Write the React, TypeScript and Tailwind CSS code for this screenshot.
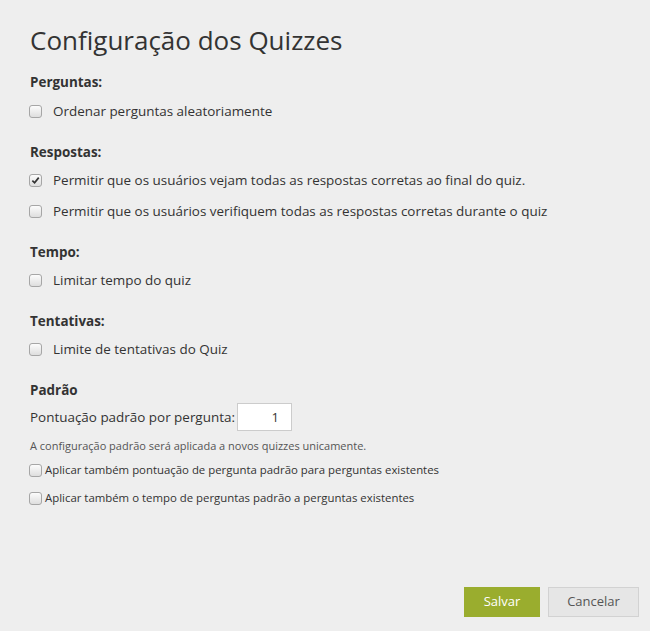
import React, { useState } from 'react';

const Check: React.FC<{ checked: boolean; onChange: () => void }> = ({ checked, onChange }) => (
  <span
    onClick={onChange}
    className="inline-flex w-[13px] h-[13px] shrink-0 items-center justify-center rounded-[3px] border border-[#a6a6a6] bg-gradient-to-b from-[#fcfcfc] to-[#dedede] cursor-pointer"
  >
    {checked && (
      <svg viewBox="0 0 10 10" className="w-[9px] h-[9px]">
        <path d="M1.5 5.2 L4 7.6 L8.6 1.8" fill="none" stroke="#333" strokeWidth="1.9" />
      </svg>
    )}
  </span>
);

const Row: React.FC<{ label: string; checked: boolean; onChange: () => void }> = ({ label, checked, onChange }) => (
  <label className="flex items-center h-5 text-[13.45px] text-[#333]">
    <Check checked={checked} onChange={onChange} />
    <span className="ml-[11px]">{label}</span>
  </label>
);

const SmallRow: React.FC<{ label: string; checked: boolean; onChange: () => void }> = ({ label, checked, onChange }) => (
  <label className="flex items-center h-[18px] text-[11.4px] text-[#333]">
    <Check checked={checked} onChange={onChange} />
    <span className="ml-[3px]">{label}</span>
  </label>
);

export default function App() {
  const [opts, setOpts] = useState({
    random: false,
    showAnswers: true,
    verifyAnswers: false,
    limitTime: false,
    limitAttempts: false,
    applyScore: false,
    applyTime: false,
  });
  const [score, setScore] = useState('1');

  const toggle = (key: keyof typeof opts) => setOpts((o) => ({ ...o, [key]: !o[key] }));

  return (
    <div className="h-[631px] bg-[#eeeeee] flex flex-col font-['Open_Sans',sans-serif] text-[#333]">
      <div className="pl-[29px] pt-[20px]">
        <h1 className="text-[26px] leading-[40px] text-[#333] ml-px">Configuração dos Quizzes</h1>

        {/* Perguntas */}
        <div className="mt-[12px]">
          <h2 className="text-[13.45px] font-bold leading-5 ml-px">Perguntas:</h2>
          <div className="mt-[9px]">
            <Row label="Ordenar perguntas aleatoriamente" checked={opts.random} onChange={() => toggle('random')} />
          </div>
        </div>

        {/* Respostas */}
        <div className="mt-[21px]">
          <h2 className="text-[13.45px] font-bold leading-5 ml-px">Respostas:</h2>
          <div className="mt-[8px] flex flex-col gap-[11px]">
            <Row
              label="Permitir que os usuários vejam todas as respostas corretas ao final do quiz."
              checked={opts.showAnswers}
              onChange={() => toggle('showAnswers')}
            />
            <Row
              label="Permitir que os usuários verifiquem todas as respostas corretas durante o quiz"
              checked={opts.verifyAnswers}
              onChange={() => toggle('verifyAnswers')}
            />
          </div>
        </div>

        {/* Tempo */}
        <div className="mt-[21px]">
          <h2 className="text-[13.45px] font-bold leading-5 ml-px">Tempo:</h2>
          <div className="mt-[8px]">
            <Row label="Limitar tempo do quiz" checked={opts.limitTime} onChange={() => toggle('limitTime')} />
          </div>
        </div>

        {/* Tentativas */}
        <div className="mt-[21px]">
          <h2 className="text-[13.45px] font-bold leading-5 ml-px">Tentativas:</h2>
          <div className="mt-[8px]">
            <Row label="Limite de tentativas do Quiz" checked={opts.limitAttempts} onChange={() => toggle('limitAttempts')} />
          </div>
        </div>

        {/* Padrão */}
        <div className="mt-[21px]">
          <h2 className="text-[13.45px] font-bold leading-5 ml-px">Padrão</h2>
          <div className="mt-[3px] flex items-center ml-px">
            <span className="text-[13.45px]">Pontuação padrão por pergunta:</span>
            <input
              value={score}
              onChange={(e) => setScore(e.target.value)}
              className="ml-[2px] w-[55px] h-[28px] bg-white border border-[#cccccc] text-right pr-[12px] text-[13px] text-[#333] outline-none"
            />
          </div>
          <p className="mt-[6px] text-[11px] leading-[18px] text-[#555] ml-px">
            A configuração padrão será aplicada a novos quizzes unicamente.
          </p>
          <div className="mt-[6px] flex flex-col gap-[10px]">
            <SmallRow
              label="Aplicar também pontuação de pergunta padrão para perguntas existentes"
              checked={opts.applyScore}
              onChange={() => toggle('applyScore')}
            />
            <SmallRow
              label="Aplicar também o tempo de perguntas padrão a perguntas existentes"
              checked={opts.applyTime}
              onChange={() => toggle('applyTime')}
            />
          </div>
        </div>
      </div>

      {/* Actions */}
      <div className="mt-auto flex justify-end gap-[8px] pr-[11px] pb-[14px]">
        <button className="w-[76px] h-[30px] bg-[#9aad2e] text-white text-[13px]">Salvar</button>
        <button className="w-[91px] h-[30px] bg-[#e6e6e6] border border-[#d2d2d2] text-[#555] text-[13px]">
          Cancelar
        </button>
      </div>
    </div>
  );
}
